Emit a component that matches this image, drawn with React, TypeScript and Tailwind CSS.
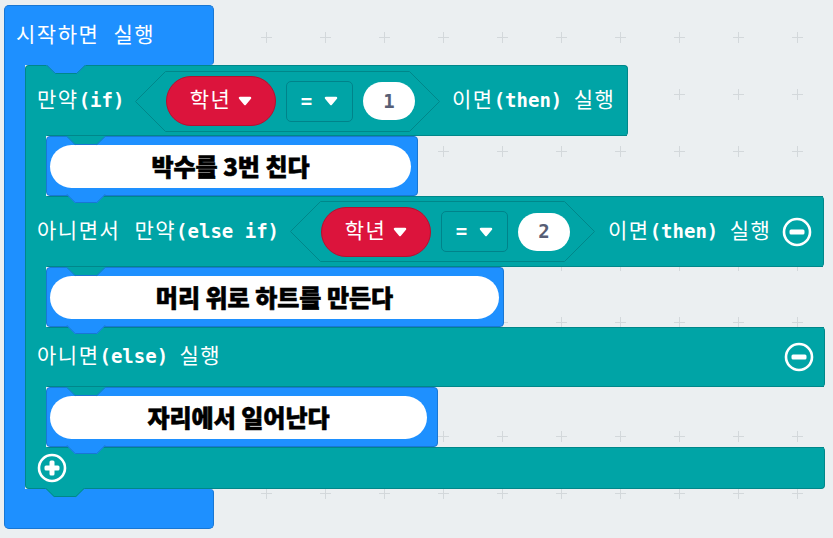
import React from "react";

function K({ children }: { children: React.ReactNode }) {
  return (
    <span className="font-['DejaVu_Sans_Mono','Noto_Sans_CJK_KR',monospace] text-[21px] font-normal tracking-[1.5px]">
      {children}
    </span>
  );
}

function M({ children }: { children: React.ReactNode }) {
  return (
    <span className="font-['DejaVu_Sans_Mono','Noto_Sans_CJK_KR',monospace] text-[19px] font-bold">
      {children}
    </span>
  );
}

function Caret() {
  return (
    <svg width="14" height="10" viewBox="0 0 14 10" className="shrink-0">
      <path
        d="M2 2H12L7 8Z"
        fill="white"
        stroke="white"
        strokeWidth="2.5"
        strokeLinejoin="round"
      />
    </svg>
  );
}

function MinusIcon() {
  return (
    <svg width="30" height="30" viewBox="0 0 30 30" className="shrink-0">
      <circle cx="15" cy="15" r="13" fill="none" stroke="white" strokeWidth="2.6" />
      <rect x="7.5" y="12.5" width="15" height="5" rx="1.5" fill="white" />
    </svg>
  );
}

function PlusIcon() {
  return (
    <svg width="30" height="30" viewBox="0 0 30 30" className="shrink-0">
      <circle cx="15" cy="15" r="13" fill="none" stroke="white" strokeWidth="2.6" />
      <rect x="7.5" y="12.5" width="15" height="5" rx="1.5" fill="white" />
      <rect x="12.5" y="7.5" width="5" height="15" rx="1.5" fill="white" />
    </svg>
  );
}

/* small trapezoid piece: notch or tab, wide at top */
function Piece({ fill, stroke, className }: { fill: string; stroke: string; className: string }) {
  return (
    <svg width="40" height="10" viewBox="0 0 40 10" className={className}>
      <path d="M0 0H40L31 9H9Z" fill={fill} />
      <path d="M0.5 0L9.2 8.5H30.8L39.5 0" fill="none" stroke={stroke} strokeWidth="1" />
    </svg>
  );
}

function Hex({ children }: { children: React.ReactNode }) {
  return (
    <div className="relative flex h-[61px] w-[305px] shrink-0 items-center">
      <svg width="305" height="61" viewBox="0 0 305 61" className="absolute inset-0">
        <path
          d="M30.5 0.5H274.5L304.5 30.5L274.5 60.5H30.5L0.5 30.5Z"
          fill="#00a4a6"
          stroke="#00878a"
          strokeWidth="1"
        />
      </svg>
      <div className="relative flex items-center gap-[10px] pl-[31px]">{children}</div>
    </div>
  );
}

function Compare({ n }: { n: string }) {
  return (
    <Hex>
      <div className="flex h-[50px] w-[110px] items-center justify-center gap-[7px] rounded-full border border-[#b5102f] bg-[#dc143c] text-white">
        <K>학년</K>
        <Caret />
      </div>
      <div className="flex h-[41px] w-[67px] items-center justify-center gap-[12px] rounded-[5px] border border-[#00838a] text-white">
        <M>=</M>
        <Caret />
      </div>
      <div className="flex h-[38px] w-[52px] items-center justify-center rounded-full bg-white text-[#575e75]">
        <M>{n}</M>
      </div>
    </Hex>
  );
}

function Stmt({
  blockW,
  pillW,
  text,
}: {
  blockW: string;
  pillW: string;
  text: string;
}) {
  return (
    <div
      className={`relative z-10 flex h-[60px] items-center rounded-[4px] border border-[#1877d4] bg-[#1e90ff] pl-[3px] ${blockW}`}
    >
      <Piece fill="#00a4a6" stroke="#1877d4" className="absolute left-[19px] top-[-1px]" />
      <div
        className={`flex h-[43px] items-center justify-center rounded-full bg-white ${pillW}`}
      >
        <span className="font-['Noto_Sans_CJK_KR',sans-serif] text-[24px] font-black leading-none text-black [-webkit-text-stroke:0.6px_black]">
          {text}
        </span>
      </div>
      <Piece fill="#1e90ff" stroke="#1877d4" className="absolute left-[19px] top-full mt-[-1px]" />
    </div>
  );
}

function Strip() {
  return <div className="w-[21px] shrink-0 self-stretch border-l border-[#00878a] bg-[#00a4a6]" />;
}

export default function App() {
  return (
    <div className="relative h-screen w-full overflow-hidden bg-[#ebeff1]">
      <svg className="absolute inset-0 h-full w-full">
        <defs>
          <pattern id="grid" width="59" height="57" patternUnits="userSpaceOnUse">
            <path d="M25 37.5H36M30.5 32V43" stroke="#d3d8db" strokeWidth="1" />
          </pattern>
        </defs>
        <rect width="100%" height="100%" fill="url(#grid)" />
      </svg>

      <div className="relative flex flex-col pl-[4px] pt-[5px]">
        {/* hat top */}
        <div className="flex h-[60px] w-[210px] items-center rounded-t-[5px] rounded-br-[4px] border-x border-t border-[#1877d4] bg-[#1e90ff] pl-[11px] text-white">
          <span className="whitespace-nowrap">
            <K>시작하면 실행</K>
          </span>
        </div>

        {/* hat middle */}
        <div className="flex">
          <div className="w-[21px] shrink-0 self-stretch border-l border-[#1877d4] bg-[#1e90ff]" />

          {/* if block */}
          <div className="relative flex flex-col text-white">
            {/* row 1 */}
            <div className="relative flex h-[71px] w-[603px] items-center rounded-t-[4px] rounded-br-[4px] border-x border-t border-[#00878a] bg-[#00a4a6] pl-[11px]">
              <Piece fill="#1e90ff" stroke="#00878a" className="absolute left-[20px] top-[-1px]" />
              <div className="absolute bottom-0 left-[21px] right-0 h-px bg-[#00878a]" />
              <div className="w-[87px] shrink-0 whitespace-nowrap">
                <K>만약</K>
                <M>(if)</M>
              </div>
              <div className="ml-[11px]">
                <Compare n="1" />
              </div>
              <div className="ml-[12px] whitespace-nowrap">
                <K>이면</K>
                <M>(then) </M>
                <K>실행</K>
              </div>
            </div>

            <div className="flex">
              <Strip />
              <Stmt blockW="w-[372px]" pillW="w-[361px]" text="박수를 3번 친다" />
            </div>

            {/* row 2 */}
            <div className="relative flex h-[71px] w-[799px] items-center rounded-r-[4px] border-x border-[#00878a] bg-[#00a4a6] pl-[11px] pr-[11px]">
              <div className="absolute left-[21px] right-0 top-0 h-px bg-[#00878a]" />
              <div className="absolute bottom-0 left-[21px] right-0 h-px bg-[#00878a]" />
              <div className="w-[242px] shrink-0 whitespace-nowrap">
                <K>아니면서 만약</K>
                <M>(else if)</M>
              </div>
              <div className="ml-[11px]">
                <Compare n="2" />
              </div>
              <div className="ml-[13px] whitespace-nowrap">
                <K>이면</K>
                <M>(then) </M>
                <K>실행</K>
              </div>
              <div className="ml-auto">
                <MinusIcon />
              </div>
            </div>

            <div className="flex">
              <Strip />
              <Stmt blockW="w-[458px]" pillW="w-[449px]" text="머리 위로 하트를 만든다" />
            </div>

            {/* row 3 */}
            <div className="relative flex h-[60px] w-[800px] items-center justify-between rounded-r-[4px] border-x border-[#00878a] bg-[#00a4a6] pl-[11px] pr-[10px]">
              <div className="absolute left-[21px] right-0 top-0 h-px bg-[#00878a]" />
              <div className="absolute bottom-0 left-[21px] right-0 h-px bg-[#00878a]" />
              <div className="whitespace-nowrap">
                <K>아니면</K>
                <M>(else) </M>
                <K>실행</K>
              </div>
              <MinusIcon />
            </div>

            <div className="flex">
              <Strip />
              <Stmt blockW="w-[392px]" pillW="w-[377px]" text="자리에서 일어난다" />
            </div>

            {/* bottom row */}
            <div className="relative flex h-[42px] w-[800px] items-center rounded-r-[4px] rounded-bl-[4px] border-x border-b border-[#00878a] bg-[#00a4a6] pl-[11px]">
              <div className="absolute left-[21px] right-0 top-0 h-px bg-[#00878a]" />
              <PlusIcon />
              <Piece fill="#00a4a6" stroke="#00878a" className="absolute left-[19px] top-full z-10" />
            </div>
          </div>
        </div>

        {/* hat bottom */}
        <div className="h-[40px] w-[210px] rounded-b-[5px] rounded-tr-[4px] border-x border-b border-[#1877d4] bg-[#1e90ff]" />
      </div>
    </div>
  );
}
